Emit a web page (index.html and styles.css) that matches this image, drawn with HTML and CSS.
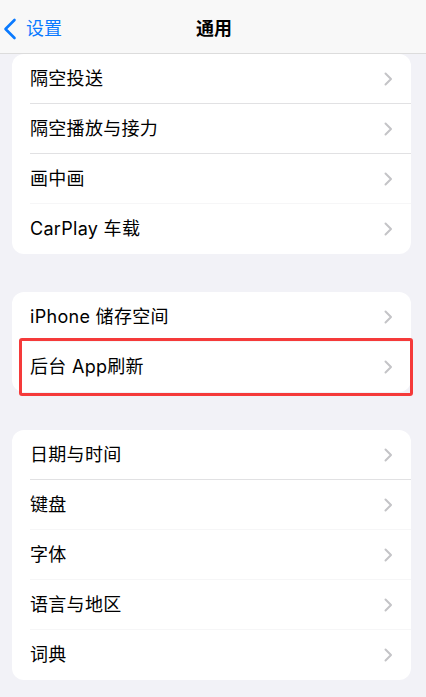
FILE: index.html
```html
<!DOCTYPE html>
<html lang="zh-CN">
<head>
<meta charset="utf-8">
<title>通用</title>
<link rel="stylesheet" href="styles.css">
</head>
<body>
<header class="nav">
  <div class="back">
    <svg class="back-icon" width="14" height="22" viewBox="0 0 14 22"><path d="M11.5 2 L2.5 11 L11.5 20" fill="none" stroke="#0a7aff" stroke-width="2.6" stroke-linecap="round" stroke-linejoin="round"/></svg>
    <span class="back-text">设置</span>
  </div>
  <div class="title">通用</div>
  <div></div>
</header>
<main class="content">
  <section class="group">
    <div class="row"><span class="label">隔空投送</span><svg class="chev" width="9" height="14" viewBox="0 0 9 14"><path d="M1.5 1.5 L7 7 L1.5 12.5" fill="none" stroke="#c4c4c7" stroke-width="2" stroke-linecap="round" stroke-linejoin="round"/></svg></div>
    <div class="row"><span class="label">隔空播放与接力</span><svg class="chev" width="9" height="14" viewBox="0 0 9 14"><path d="M1.5 1.5 L7 7 L1.5 12.5" fill="none" stroke="#c4c4c7" stroke-width="2" stroke-linecap="round" stroke-linejoin="round"/></svg></div>
    <div class="row faint"><span class="label">画中画</span><svg class="chev" width="9" height="14" viewBox="0 0 9 14"><path d="M1.5 1.5 L7 7 L1.5 12.5" fill="none" stroke="#c4c4c7" stroke-width="2" stroke-linecap="round" stroke-linejoin="round"/></svg></div>
    <div class="row"><span class="label">CarPlay 车载</span><svg class="chev" width="9" height="14" viewBox="0 0 9 14"><path d="M1.5 1.5 L7 7 L1.5 12.5" fill="none" stroke="#c4c4c7" stroke-width="2" stroke-linecap="round" stroke-linejoin="round"/></svg></div>
  </section>
  <section class="group">
    <div class="row faint"><span class="label">iPhone 储存空间</span><svg class="chev" width="9" height="14" viewBox="0 0 9 14"><path d="M1.5 1.5 L7 7 L1.5 12.5" fill="none" stroke="#c4c4c7" stroke-width="2" stroke-linecap="round" stroke-linejoin="round"/></svg></div>
    <div class="row highlighted"><span class="label">后台 App刷新</span><svg class="chev" width="9" height="14" viewBox="0 0 9 14"><path d="M1.5 1.5 L7 7 L1.5 12.5" fill="none" stroke="#c4c4c7" stroke-width="2" stroke-linecap="round" stroke-linejoin="round"/></svg><span class="mark"></span></div>
  </section>
  <section class="group">
    <div class="row"><span class="label">日期与时间</span><svg class="chev" width="9" height="14" viewBox="0 0 9 14"><path d="M1.5 1.5 L7 7 L1.5 12.5" fill="none" stroke="#c4c4c7" stroke-width="2" stroke-linecap="round" stroke-linejoin="round"/></svg></div>
    <div class="row faint"><span class="label">键盘</span><svg class="chev" width="9" height="14" viewBox="0 0 9 14"><path d="M1.5 1.5 L7 7 L1.5 12.5" fill="none" stroke="#c4c4c7" stroke-width="2" stroke-linecap="round" stroke-linejoin="round"/></svg></div>
    <div class="row faint"><span class="label">字体</span><svg class="chev" width="9" height="14" viewBox="0 0 9 14"><path d="M1.5 1.5 L7 7 L1.5 12.5" fill="none" stroke="#c4c4c7" stroke-width="2" stroke-linecap="round" stroke-linejoin="round"/></svg></div>
    <div class="row faint"><span class="label">语言与地区</span><svg class="chev" width="9" height="14" viewBox="0 0 9 14"><path d="M1.5 1.5 L7 7 L1.5 12.5" fill="none" stroke="#c4c4c7" stroke-width="2" stroke-linecap="round" stroke-linejoin="round"/></svg></div>
    <div class="row"><span class="label">词典</span><svg class="chev" width="9" height="14" viewBox="0 0 9 14"><path d="M1.5 1.5 L7 7 L1.5 12.5" fill="none" stroke="#c4c4c7" stroke-width="2" stroke-linecap="round" stroke-linejoin="round"/></svg></div>
  </section>
</main>
</body>
</html>
```

FILE: styles.css
```css
* { box-sizing: border-box; }
html, body { margin: 0; padding: 0; }
body {
  background: #f2f2f7;
  font-family: Inter, "Noto Sans CJK SC", sans-serif;
  color: #000;
  width: 426px;
  height: 697px;
  overflow: hidden;
}
.nav {
  height: 54px;
  background: #f8f8f8;
  border-bottom: 1px solid #dcdcdc;
  display: grid;
  grid-template-columns: 1fr auto 1fr;
  align-items: center;
  padding-top: 5px;
}
.back {
  display: flex;
  align-items: center;
  padding-left: 3px;
  color: #0a7aff;
}
.back-icon { display: block; }
.back-text {
  margin-left: 9px;
  font-size: 18px;
  line-height: 22px;
}
.title {
  font-size: 18px;
  font-weight: 700;
  line-height: 22px;
  padding-left: 2px;
}
.content {
  display: flex;
  flex-direction: column;
  gap: 38px;
  padding: 0 15px 0 12px;
}
.group {
  background: #fff;
  border-radius: 12px;
}
.row {
  position: relative;
  height: 50px;
  margin-left: 18px;
  padding-right: 18px;
  display: flex;
  align-items: center;
  justify-content: space-between;
  border-bottom: 1px solid #e1e1e3;
}
.row.faint { border-bottom-color: #f6f6f7; }
.row:last-child { border-bottom: none; }
.label {
  font-size: 18px;
  line-height: 24px;
  letter-spacing: 0.3px;
}
.chev { display: block; flex: none; }
.mark {
  position: absolute;
  top: -4px;
  bottom: -4px;
  left: -11px;
  right: -2px;
  border: 3px solid #f53a3a;
  border-radius: 3px;
  pointer-events: none;
}
```
